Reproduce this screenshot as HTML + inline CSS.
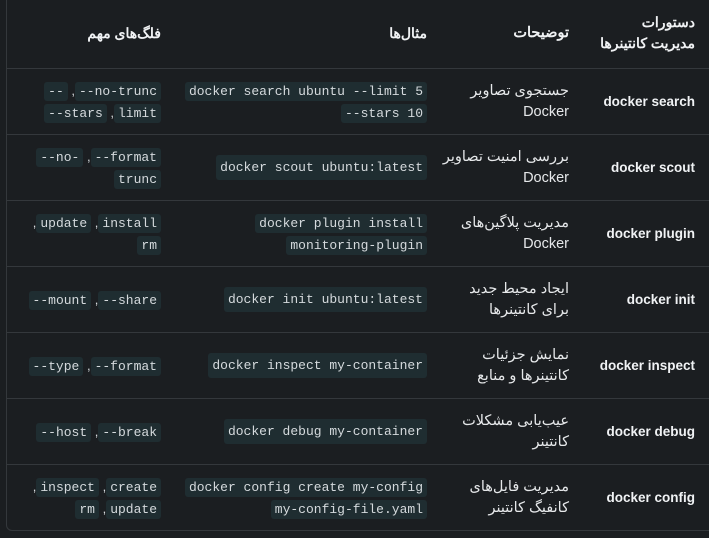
<!DOCTYPE html>
<html><head><meta charset="utf-8"><style>
html,body{margin:0;padding:0;background:#1b1e21;width:709px;height:538px;overflow:hidden;font-family:"Liberation Sans","Noto Sans CJK SC",sans-serif;color:#e6e8ea}
.t{position:absolute;left:6px;top:-2px;width:710px;border:1px solid #34383c;border-top:none;border-radius:0 0 6px 6px}
.r{position:relative;border-top:1px solid #34383c;height:65px}
.r.h{border-top:none;height:70px}
.c{position:absolute;top:0;bottom:0;display:flex;flex-direction:column;justify-content:center;align-items:flex-end;text-align:right;font-size:14px;line-height:21px;white-space:nowrap}
.c1{right:22px;font-size:13.5px}
.c2{right:148px;font-size:14.5px}
.c span.p,.c2 span{direction:rtl}
.c3{right:290px}
.c4{right:556px}
b{font-weight:bold;color:#f0f2f4}
code{font-family:"Liberation Mono",monospace;font-size:13px;background:#1f2d31;color:#d5dadd;padding:2px 4px;border-radius:3px}
.x{font-size:13px;color:#d5dadd}
</style></head><body>
<div class="t">
<div class="r h"><div class="c c1" style="font-size:14px"><span class="p"><b>دستورات</b></span><span class="p"><b>مدیریت کانتینرها</b></span></div><div class="c c2"><span><b>توضیحات</b></span></div><div class="c c3"><span class="p"><b>مثال‌ها</b></span></div><div class="c c4"><span class="p"><b>فلگ‌های مهم</b></span></div></div>
<div class="r"><div class="c c1"><b>docker search</b></div><div class="c c2"><span>جستجوی تصاویر</span><span>Docker</span></div><div class="c c3"><span><code>docker search ubuntu --limit 5</code></span><span><code>--stars 10</code></span></div><div class="c c4"><span><code>--</code><span class="x"> ,</span><code>--no-trunc</code></span><span><code>--stars</code><span class="x"> ,</span><code>limit</code></span></div></div>
<div class="r"><div class="c c1"><b>docker scout</b></div><div class="c c2"><span>بررسی امنیت تصاویر</span><span>Docker</span></div><div class="c c3"><code>docker scout ubuntu:latest</code></div><div class="c c4"><span><code>--no-</code><span class="x"> ,</span><code>--format</code></span><span><code>trunc</code></span></div></div>
<div class="r"><div class="c c1"><b>docker plugin</b></div><div class="c c2"><span>مدیریت پلاگین‌های</span><span>Docker</span></div><div class="c c3"><span><code>docker plugin install</code></span><span><code>monitoring-plugin</code></span></div><div class="c c4"><span><span class="x">,</span><code>update</code><span class="x"> ,</span><code>install</code></span><span><code>rm</code></span></div></div>
<div class="r"><div class="c c1"><b>docker init</b></div><div class="c c2"><span>ایجاد محیط جدید</span><span>برای کانتینرها</span></div><div class="c c3"><code>docker init ubuntu:latest</code></div><div class="c c4"><span><code>--mount</code><span class="x"> ,</span><code>--share</code></span></div></div>
<div class="r"><div class="c c1"><b>docker inspect</b></div><div class="c c2"><span>نمایش جزئیات</span><span>کانتینرها و منابع</span></div><div class="c c3"><code>docker inspect my-container</code></div><div class="c c4"><span><code>--type</code><span class="x"> ,</span><code>--format</code></span></div></div>
<div class="r"><div class="c c1"><b>docker debug</b></div><div class="c c2"><span>عیب‌یابی مشکلات</span><span>کانتینر</span></div><div class="c c3"><code>docker debug my-container</code></div><div class="c c4"><span><code>--host</code><span class="x"> ,</span><code>--break</code></span></div></div>
<div class="r"><div class="c c1"><b>docker config</b></div><div class="c c2"><span>مدیریت فایل‌های</span><span>کانفیگ کانتینر</span></div><div class="c c3"><span><code>docker config create my-config</code></span><span><code>my-config-file.yaml</code></span></div><div class="c c4"><span><span class="x">,</span><code>inspect</code><span class="x"> ,</span><code>create</code></span><span><code>rm</code><span class="x"> ,</span><code>update</code></span></div></div>
</div>
</body></html>
